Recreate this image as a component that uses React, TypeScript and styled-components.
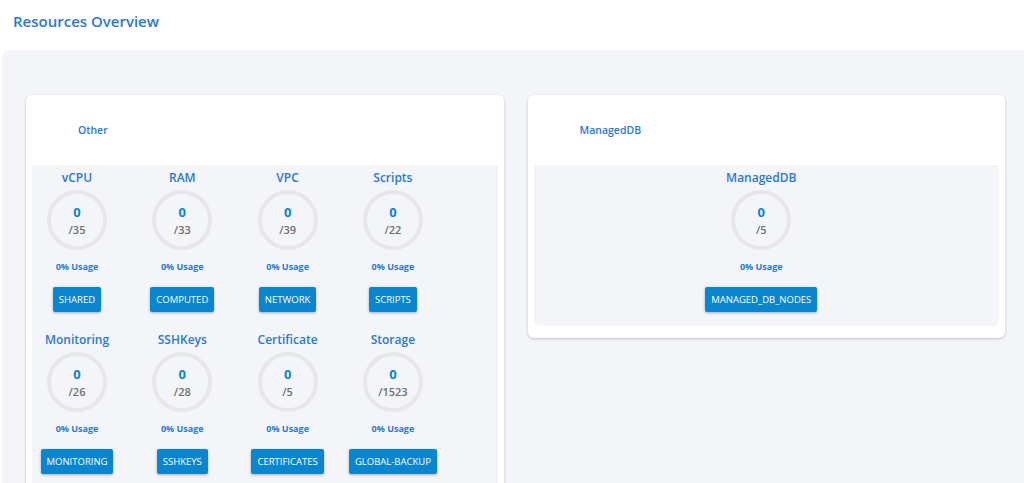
import React from 'react';
import styled, { createGlobalStyle } from 'styled-components';

type Resource = {
  title: string;
  used: number;
  limit: number;
  action: string;
};

const otherResources: Resource[] = [
  { title: 'vCPU', used: 0, limit: 35, action: 'SHARED' },
  { title: 'RAM', used: 0, limit: 33, action: 'COMPUTED' },
  { title: 'VPC', used: 0, limit: 39, action: 'NETWORK' },
  { title: 'Scripts', used: 0, limit: 22, action: 'SCRIPTS' },
  { title: 'Monitoring', used: 0, limit: 26, action: 'MONITORING' },
  { title: 'SSHKeys', used: 0, limit: 28, action: 'SSHKEYS' },
  { title: 'Certificate', used: 0, limit: 5, action: 'CERTIFICATES' },
  { title: 'Storage', used: 0, limit: 1523, action: 'GLOBAL-BACKUP' },
];

const dbResources: Resource[] = [
  { title: 'ManagedDB', used: 0, limit: 5, action: 'MANAGED_DB_NODES' },
];

const ResourceItem: React.FC<{ res: Resource }> = ({ res }) => (
  <Item>
    <ItemTitle>{res.title}</ItemTitle>
    <Ring>
      <Used>{res.used}</Used>
      <Limit>/{res.limit}</Limit>
    </Ring>
    <Usage>{Math.round((res.used / res.limit) * 100)}% Usage</Usage>
    <ActionButton>{res.action}</ActionButton>
  </Item>
);

const App: React.FC = () => {
  return (
    <>
      <GlobalStyle />
      <Header>
        <PageTitle>Resources Overview</PageTitle>
      </Header>
      <Board>
        <Card>
          <CardHeader>Other</CardHeader>
          <Panel>
            <Grid $cols={4}>
              {otherResources.map((r) => (
                <ResourceItem res={r} key={r.title} />
              ))}
            </Grid>
          </Panel>
        </Card>
        <Card>
          <CardHeader>ManagedDB</CardHeader>
          <Panel>
            <Grid $cols={1}>
              {dbResources.map((r) => (
                <ResourceItem res={r} key={r.title} />
              ))}
            </Grid>
          </Panel>
        </Card>
      </Board>
    </>
  );
};

export default App;

const GlobalStyle = createGlobalStyle`
  html, body {
    margin: 0;
    padding: 0;
    background: #ffffff;
    overflow: hidden;
  }
  body {
    font-family: "Open Sans", "Liberation Sans", sans-serif;
  }
`;

const Header = styled.header`
  padding: 12px 13px 0;
  margin-bottom: 20px;
`;

const PageTitle = styled.h1`
  margin: 0;
  font-size: 15px;
  line-height: 18px;
  font-weight: 600;
  color: #2a78d6;
`;

const Board = styled.main`
  display: grid;
  grid-template-columns: 1fr 1fr;
  align-items: start;
  column-gap: 24px;
  margin-left: 2px;
  padding: 45px 19px 40px 24px;
  min-height: 500px;
  background: #f4f5f8;
  border-radius: 8px 0 0 0;
`;

const Card = styled.section`
  background: #ffffff;
  border-radius: 6px;
  box-shadow: 0 1px 3px rgba(0, 0, 0, 0.22);
  padding: 0 6px 12px;
`;

const CardHeader = styled.div`
  display: flex;
  align-items: center;
  height: 70px;
  padding-left: 46px;
  font-size: 10.5px;
  font-weight: 600;
  color: #2a78d6;
`;

const Panel = styled.div`
  background: #f4f5f8;
  border-radius: 0 0 6px 6px;
  padding: 6px 0 14px;
`;

const Grid = styled.div<{ $cols: number }>`
  display: grid;
  grid-template-columns: ${(p) => (p.$cols === 1 ? '1fr' : `repeat(${p.$cols}, 88px)`)};
  padding: ${(p) => (p.$cols === 1 ? '0 10px 0 0' : '0 0 0 1px')};
  column-gap: 17.3px;
  row-gap: 21px;
`;

const Item = styled.div`
  display: flex;
  flex-direction: column;
  align-items: center;
`;

const ItemTitle = styled.div`
  font-size: 12px;
  line-height: 14px;
  font-weight: 600;
  color: #2a78d6;
  white-space: nowrap;
`;

const Ring = styled.div`
  box-sizing: border-box;
  width: 60px;
  height: 60px;
  margin-top: 5px;
  border: 4px solid #e7e7e7;
  border-radius: 50%;
  display: flex;
  flex-direction: column;
  align-items: center;
  justify-content: center;
  gap: 3px;
`;

const Used = styled.div`
  font-size: 13px;
  line-height: 16px;
  font-weight: 700;
  color: #0d84cf;
`;

const Limit = styled.div`
  font-size: 11px;
  line-height: 14px;
  font-weight: 600;
  color: #707070;
`;

const Usage = styled.div`
  margin-top: 12px;
  font-size: 9px;
  line-height: 10px;
  font-weight: 700;
  color: #2a78d6;
  white-space: nowrap;
`;

const ActionButton = styled.button`
  margin-top: 15px;
  height: 25px;
  padding: 0 6px;
  border: none;
  border-radius: 2px;
  background: #0a85cf;
  color: #ffffff;
  font-family: "Open Sans", "Liberation Sans", sans-serif;
  font-size: 9.5px;
  font-weight: 500;
  box-shadow: 0 1px 3px rgba(0, 0, 0, 0.3);
  white-space: nowrap;
  cursor: pointer;
`;
